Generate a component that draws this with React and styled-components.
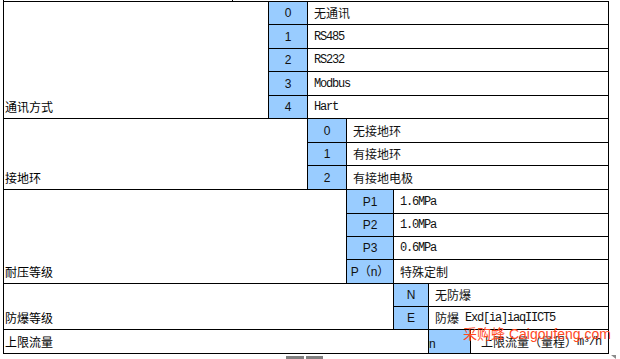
import styled, { createGlobalStyle } from "styled-components";

const GlobalStyle = createGlobalStyle`
  html, body {
    margin: 0;
    padding: 0;
    background: #fff;
  }
  body {
    font-family: "Noto Sans CJK SC", "Liberation Sans", sans-serif;
    color: #000;
  }
`;

// each section: how many columns its label covers, and its rows of [code, value]
const sections = [
  {
    label: "通讯方式",
    level: 1,
    rows: [
      ["0", "无通讯"],
      ["1", <Latin key="a">RS485</Latin>],
      ["2", <Latin key="a">RS232</Latin>],
      ["3", <Latin key="a">Modbus</Latin>],
      ["4", <Latin key="a">Hart</Latin>],
    ],
  },
  {
    label: "接地环",
    level: 2,
    rows: [
      ["0", "无接地环"],
      ["1", "有接地环"],
      ["2", "有接地电极"],
    ],
  },
  {
    label: "耐压等级",
    level: 3,
    rows: [
      ["P1", <Latin key="a">1.6MPa</Latin>],
      ["P2", <Latin key="a">1.0MPa</Latin>],
      ["P3", <Latin key="a">0.6MPa</Latin>],
      ["P（n）", "特殊定制"],
    ],
  },
  {
    label: "防爆等级",
    level: 4,
    rows: [
      ["N", "无防爆"],
      [
        "E",
        <>
          防爆<Latin>{"\u00a0Exd[ia]iaqIICT5"}</Latin>
        </>,
      ],
    ],
  },
  {
    label: "上限流量",
    level: 5,
    rows: [
      [
        "n",
        <>
          上限流量（量程）<Latin>m³/h</Latin>
        </>,
      ],
    ],
    codeAlign: "flex-start",
    indent: 10,
  },
];

export default function App() {
  let rowCursor = 1;

  return (
    <>
      <GlobalStyle />
      <Page>
        <Stub>
          <StubCell />
        </Stub>
        <Table>
          {sections.map((section) => {
            const start = rowCursor;
            rowCursor += section.rows.length;
            return [
              <Label
                key={section.label}
                $col={section.level}
                $row={start}
                $span={section.rows.length}
                $single={section.rows.length === 1}
              >
                {section.label}
              </Label>,
              ...section.rows.map(([code, value], i) => [
                <Code
                  key={`${section.label}-c${i}`}
                  $col={section.level + 1}
                  $row={start + i}
                  $align={section.codeAlign}
                >
                  {code}
                </Code>,
                <Value
                  key={`${section.label}-v${i}`}
                  $col={section.level + 2}
                  $row={start + i}
                  $indent={section.indent}
                >
                  {value}
                </Value>,
              ]),
            ];
          })}
        </Table>
        <Footer>
          <TabBar />
          <TabBar $short />
          <Corner />
        </Footer>
        <Watermark>采购蜂 Caigoufeng.com</Watermark>
      </Page>
    </>
  );
}

function Latin({ children }) {
  return <Mono>{children}</Mono>;
}

const Page = styled.div`
  position: relative;
  width: 620px;
  height: 359px;
  overflow: hidden;
`;

const Stub = styled.div`
  margin-left: 3px;
  width: 606px;
  height: 1px;
  display: flex;
  border-left: 1px solid #000;
  box-sizing: border-box;
`;

const StubCell = styled.div`
  width: 228px;
  border-right: 1px solid #000;
`;

const Table = styled.div`
  margin-left: 3px;
  width: 606px;
  box-sizing: border-box;
  display: grid;
  grid-template-columns: 264px 38px 38px 46px 34px 41px 1fr;
  grid-template-rows: 22px 23px 22px 23px 22px 23px 22px 23px 23px 22px 22px 23px 22px 22px 23px;
  gap: 1px;
  padding: 1px;
  background: #000;
`;

const Cell = styled.div`
  display: flex;
  align-items: center;
  font-size: 12px;
  line-height: 14px;
  white-space: nowrap;
  overflow: hidden;
`;

const Label = styled(Cell)`
  grid-column: 1 / span ${(p) => p.$col};
  grid-row: ${(p) => p.$row} / span ${(p) => p.$span};
  background: #fff;
  align-items: ${(p) => (p.$single ? "center" : "flex-end")};
  padding: 0 0 ${(p) => (p.$single ? 0 : 4)}px 1px;
  font-family: "Noto Sans CJK SC", sans-serif;
`;

const Code = styled(Cell)`
  grid-column: ${(p) => p.$col};
  grid-row: ${(p) => p.$row};
  background: #99ccff;
  justify-content: ${(p) => p.$align || "center"};
  padding-top: ${(p) => (p.$align ? 5 : 0)}px;
  font-family: "Liberation Sans", "Noto Sans CJK SC", sans-serif;
  color: #111;
`;

const Value = styled(Cell)`
  grid-column: ${(p) => p.$col} / -1;
  grid-row: ${(p) => p.$row};
  background: #fff;
  padding-left: ${(p) => p.$indent || 6}px;
  font-family: "Noto Sans CJK SC", sans-serif;
  color: #111;
`;

const Mono = styled.span`
  font-family: "Liberation Mono", "DejaVu Sans Mono", monospace;
  letter-spacing: -1.2px;
  font-size: 12px;
`;

const Footer = styled.div`
  display: flex;
  align-items: flex-end;
  height: 5px;
  padding-left: 286px;
  gap: 2px;
`;

const TabBar = styled.div`
  width: ${(p) => (p.$short ? 17 : 18)}px;
  height: 3px;
  background: #808080;
`;

const Corner = styled.div`
  margin-left: 286px;
  width: 0;
  height: 0;
  border-left: 5px solid transparent;
  border-bottom: 4px solid #8a8a8a;
  transform: scaleY(-1);
`;

const Watermark = styled.div`
  position: absolute;
  left: 463px;
  top: 325px;
  font-family: "Liberation Sans", "Noto Sans CJK SC", sans-serif;
  font-size: 14px;
  line-height: 18px;
  color: #ff4a1f;
  white-space: nowrap;
  pointer-events: none;
`;
